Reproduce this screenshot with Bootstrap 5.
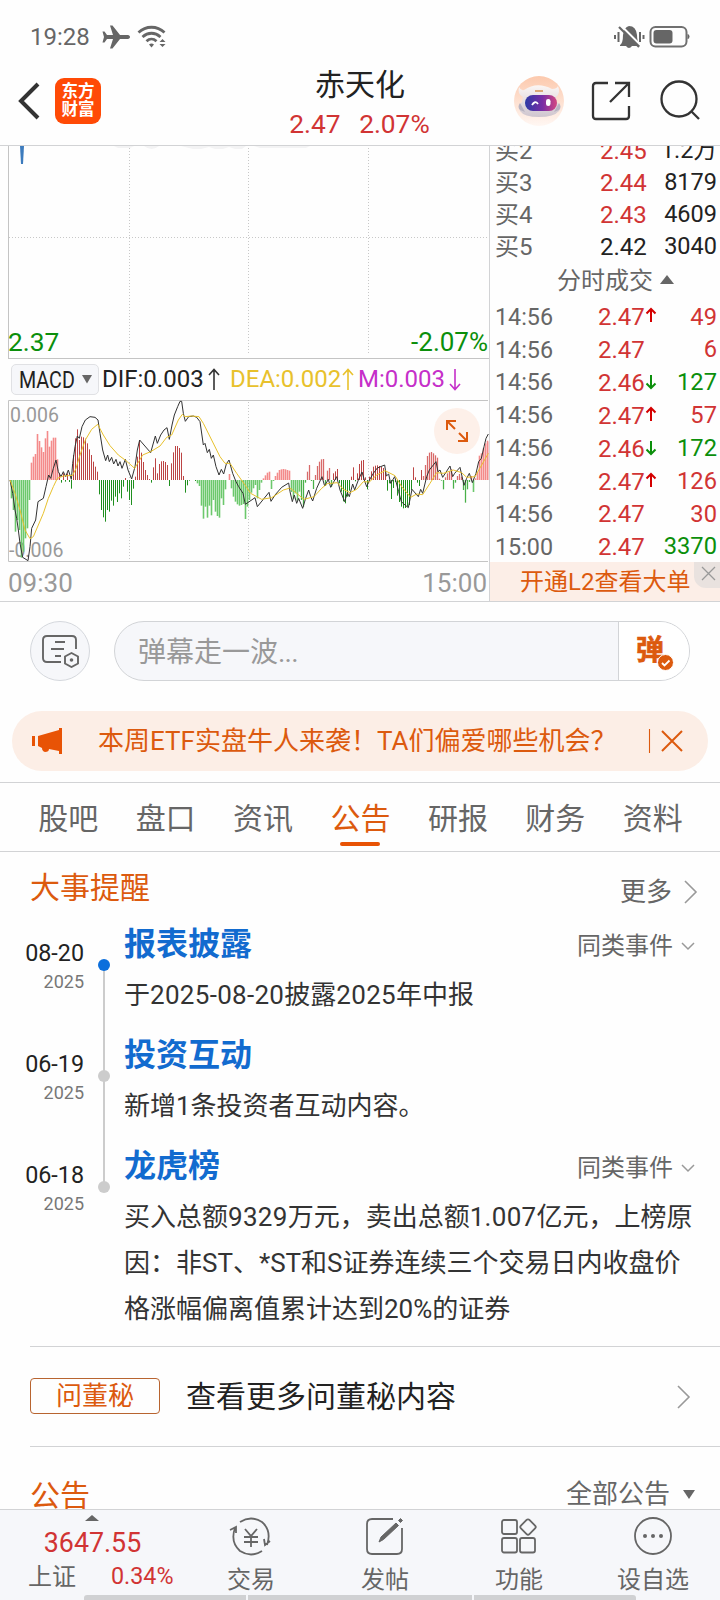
<!DOCTYPE html>
<html lang="zh-CN">
<head>
<meta charset="utf-8">
<meta name="viewport" content="width=device-width, initial-scale=1">
<title>赤天化</title>
<link href="https://cdn.jsdelivr.net/npm/bootstrap@5.3.0/dist/css/bootstrap.min.css" rel="stylesheet">
<style>
:root{--up:#d13434;--down:#0b8f0b;--brand:#dc5a0e;--ink:#222;--mid:#666;--soft:#999;--rule:#d2d3d5;--pale:#f6f7fa}
body{font-family:Roboto,"Noto Sans CJK SC",sans-serif;line-height:1;color:var(--ink);background:#fefefe;width:720px;height:1600px;overflow:hidden}
svg{display:block;flex:none}
.up{color:var(--up)}.down{color:var(--down)}.brand{color:var(--brand)}.mid{color:var(--mid)}.soft{color:var(--soft)}
.f18{font-size:18px}.f20{font-size:19.5px}.f23{font-size:23.3px}.f24{font-size:24px}.f26{font-size:26px}.f30{font-size:30px}
.dg{letter-spacing:.3px}
.statusbar{height:72px;padding:1px 30px 0 30px;color:#666}
.topbar{height:74px;border-bottom:1px solid var(--rule)}
.side{width:240px}
.logo{width:46px;height:46px;border-radius:9px;background:#ff4a06;color:#fff;font-size:16.5px;font-weight:700;line-height:18px}
.quote{height:456px;border-bottom:1px solid var(--rule)}
.chartcol{width:490px;padding-left:8px;border-right:1px solid var(--rule)}
.price-pane{height:213px;border-left:1px solid #c4c4c4;border-bottom:1px solid #c4c4c4}
.price-pane svg,.macd-pane > svg{position:absolute;left:0;top:0}
.price-pane .lab{position:absolute;bottom:3px}
.legend-row{height:41px;font-size:24px;padding-left:3px}
.picker{width:88px;height:31px;background:var(--pale);border:1px solid #e0e1e4;border-radius:5px;padding-left:7px}
.picker .nm{width:55px;transform:scaleX(.82);transform-origin:0 50%}
.macd-pane{height:162px}
.macd-pane .lab{position:absolute;left:2px}
.expand{position:absolute;left:426px;top:8px;width:46px;height:46px;background:#fdf0e9;border-radius:50%}
.axis{height:40px;padding-right:2px;padding-top:1px}
.book{width:230px;overflow:hidden}
.lv{height:32px;padding:0 3px 0 5px}
.lv span:nth-child(1){width:105px}.lv span:nth-child(2){width:54px}
.lv span:nth-child(3){flex:1;text-align:right;font-size:23.5px}
.tick{height:32.85px;padding:0 3px 0 5px}
.tick .tm{width:103px;font-size:23.3px}.tick .pr{width:47px}.tick .ar{width:14px}.tick .vol{flex:1;text-align:right;font-size:23.7px}
.l2{height:40px;background:#fceee7;padding-left:30px;padding-bottom:1px;position:relative}
.l2 .x{position:absolute;right:0;top:0;width:26px;height:26px;background:#e9e2df;border-bottom-left-radius:12px}
.barrage{height:109px;padding:19px 30px 0}
.setbtn{width:60px;height:60px;border:1px solid #d5d8dd;border-radius:50%;background:var(--pale)}
.capsule{width:576px;height:60px;border:1px solid #d2d4d7;border-radius:30px;background:var(--pale);font-size:28px;overflow:hidden}
.capsule .send{width:71px;background:#fff;border-left:1px solid #d2d4d7}
.promo{height:60px;margin:0 12px;border-radius:30px;background:#fceee6;padding:0 24px 0 20px;font-size:26px}
.tabs{margin-top:11px;height:70px;border-top:1px solid var(--rule);border-bottom:1px solid var(--rule);padding:0 19px;font-size:30px}
.tabs .t{position:relative;height:68px;padding:3px 0 0 1px}
.tabs .on::after{content:"";position:absolute;left:50%;bottom:5px;width:40px;height:4px;margin-left:-20px;border-radius:2px;background:#e85305}
.secthead{height:74px;padding:0 22px 2px 30px}
.ev{min-height:111px}
.ev .date{width:84px;padding-top:16px;text-align:right}
.ev .date .y{margin-top:8px;color:#777}
.rail{width:40px;position:relative}
.rail i{position:absolute;left:14px;top:33px;width:12px;height:12px;border-radius:50%;background:#ccc}
.rail i.now{background:#0c6fdc}
.rail.go::before{content:"";position:absolute;left:19px;top:39px;width:2px;height:111px;background:#ccc}
.ev h3{font-size:32px;line-height:36px;font-weight:700;color:#126bcf;margin:0}
.ev p{font-size:26px;line-height:46px;margin:10px 0 0;color:#333}
.ask{margin-left:30px;height:101px;border-top:1px solid var(--rule);border-bottom:1px solid var(--rule);padding-right:29px}
.asktag{width:130px;height:36px;border:1px solid #b86430;border-radius:4px;margin-top:-2px}
.notice{height:62px;padding:34px 24px 0 30px;overflow:hidden}
.dock{height:91px;background:var(--pale);border-top:1px solid var(--rule);position:relative}
.dock .idx{width:184px}
.dock .item{width:134px;padding-top:7px}
.dock .item span{margin-top:11px}
.scrollhint{position:absolute;left:84px;bottom:0;width:552px;height:5px;gap:2px}
.scrollhint span{background:#d0d1d3}
</style>
</head>
<body>
<div class="statusbar d-flex align-items-center justify-content-between">
  <div class="d-flex align-items-center f24"><span style="width:61px;margin-right:2px">19:28</span>
    <svg class="ms-2" width="30" height="26" viewBox="0 0 30 26"><path fill="#666" d="M29 13c0 1.500-1.500 2-3 2h-7l-7.500 9.500H9L12 15H6l-2.500 3.500H1.500L3 13 1.500 7.500h2L6 11h6L9 1.500h2.500L19 11h7c1.500 0 3 .5 3 2z"/></svg>
    <svg style="margin-left:6px" width="30" height="26" viewBox="0 0 30 26" fill="none" stroke="#666" stroke-width="2.800"><path d="M1.500 8.500C9 1.500 20 1.500 27.500 8.500M5.500 13C11 8 18 8 23.500 13M9.500 17.200c3-2.800 7-2.800 10 0"/><path fill="#666" stroke="none" d="M12 20.500q2.500-2 5 0l-2.500 3zM22.500 18l3-3 3 3zM22.500 20l3 3 3-3z"/></svg>
  </div>
  <div class="d-flex align-items-center">
    <svg width="32" height="26" viewBox="0 0 32 26"><path fill="#666" d="M7 21q3-2 3-10 1-8 6-9 7 0 8 9 0 7 3 9v2h-8q-3 4-6 0H7z"/><path stroke="#fefefe" stroke-width="2" d="M6.500 0l22 22"/><path stroke="#666" stroke-width="2.200" d="M6 3l20 20"/><path stroke="#666" stroke-width="2" d="M2 11v4M5.500 8v10M27 8v10M30.500 11v4"/></svg>
    <svg class="ms-1" width="41" height="24" viewBox="0 0 41 24"><rect x="1.500" y="2" width="36" height="19.500" rx="5" fill="none" stroke="#707070" stroke-width="2"/><rect x="4.500" y="5" width="19" height="13.500" rx="3" fill="#666"/><path fill="#666" d="M38.500 9q2 0 2 2.500t-2 2.500z"/></svg>
  </div>
</div>

<header class="topbar d-flex">
  <div class="side d-flex align-items-start ps-3">
    <svg width="26" height="40" viewBox="0 0 26 40" style="margin:8px 13px 0 0"><path d="M22 4L5 21l17 17" fill="none" stroke="#333" stroke-width="4"/></svg>
    <div class="logo d-flex flex-column align-items-center justify-content-center" style="margin-top:6px"><span>东方</span><span>财富</span></div>
  </div>
  <div class="side text-center"><div style="font-size:30px;line-height:26px">赤天化</div><div class="up" style="font-size:26.3px;margin:13px 0 0 -1px;white-space:pre">2.47 <span style="margin-left:12px">2.07%</span></div></div>
  <div class="side d-flex align-items-start" style="padding-left:33px">
    <svg width="52" height="52" viewBox="0 0 52 52" style="margin-top:3px"><defs><linearGradient id="halo" x2="0" y2="1"><stop stop-color="#fcc9ad"/><stop offset="1" stop-color="#fff7f3"/></linearGradient><linearGradient id="shell" x2="0" y2="1"><stop stop-color="#fbf6f4"/><stop offset="1" stop-color="#cfc6cf"/></linearGradient><linearGradient id="visor"><stop stop-color="#2c3aa5"/><stop offset=".55" stop-color="#7a2da5"/><stop offset="1" stop-color="#d44880"/></linearGradient></defs><circle cx="26" cy="26" r="25" fill="url(#halo)"/><path fill="url(#shell)" d="M6 12q2 4 5 3Q24 6 39 14q5 0 6-3 3 7-2 11l1 5q5 4 2 9-5 6-20 6-15 0-19-6-2-6 2-9l1-5Q4 19 6 12z"/><path fill="#b9b4c2" d="M7 28q-3 4 0 7l5 2zM46 28q3 4 0 7l-5 2z"/><rect x="12" y="20" width="32" height="16" rx="8" fill="url(#visor)"/><path d="M19 30q3-5 6-1" fill="none" stroke="#fff" stroke-width="1.800"/><rect x="33" y="24" width="4.500" height="7" rx="2.200" fill="#fff"/><path d="M22 16h8" stroke="#dca878" stroke-width="2"/></svg>
    <svg width="42" height="42" viewBox="0 0 42 42" style="margin:8px 0 0 25px" fill="none" stroke="#333" stroke-width="2.300"><path d="M18 3H6Q3 3 3 6v30q0 3 3 3h30q3 0 3-3V26M25 3h14v14M39 3L20 22"/></svg>
    <svg width="44" height="44" viewBox="0 0 44 44" style="margin:6px 0 0 25px" fill="none" stroke="#333" stroke-width="2.300"><circle cx="22" cy="21" r="17.500"/><path d="M34 33l8 8"/></svg>
  </div>
</header>

<section class="quote d-flex">
  <div class="chartcol">
    <div class="price-pane position-relative">
      <svg width="480" height="211" viewBox="0 0 480 211"><g stroke="#c8c8c8" stroke-dasharray="1 2"><path d="M120.500 2v207M239.500 2v207M359.500 2v207M0 91.500h479"/></g><path fill="#3c7bbd" d="M11 0h4l-1 18h-2z"/><path fill="#f3f3f4" d="M105 0h20l-4 2h-12zM135 0h15q-7 6-15 0zM172 0h65l-4 3h-7l-6-2-6 2h-8l-6-2-8 2h-8zM245 0h56l-4 2h-46z"/></svg>
      <span class="lab down" style="left:-1px;font-size:26.300px">2.37</span><span class="lab f26 down" style="right:1px">-2.07%</span>
    </div>
    <div class="legend-row d-flex align-items-center">
      <div class="picker d-flex align-items-center"><span class="nm">MACD</span><svg width="12" height="9" viewBox="0 0 12 9" style="margin-left:7px"><path fill="#666" d="M1 0h10L6 8.500z"/></svg></div>
      <span style="margin:-2px 0 0 3px;width:105px">DIF:0.003</span>
      <svg width="14" height="24" viewBox="0 0 14 24" style="margin-top:-2px" fill="none" stroke="#333" stroke-width="1.600"><path d="M7 23V3M2 8l5-5.500L12 8"/></svg>
      <span style="margin:-2px 0 0 9px;width:111px;color:#e8c12c">DEA:0.002</span>
      <svg width="14" height="24" viewBox="0 0 14 24" style="margin-top:-2px" fill="none" stroke="#e8c12c" stroke-width="1.600"><path d="M7 23V3M2 8l5-5.500L12 8"/></svg>
      <span style="margin:-2px 0 0 3px;width:90px;color:#c52fc9">M:0.003</span>
      <svg width="14" height="24" viewBox="0 0 14 24" style="margin-top:-2px" fill="none" stroke="#c52fc9" stroke-width="1.600"><path d="M7 2v20M2 17l5 5.500 5-5.500"/></svg>
    </div>
    <div class="macd-pane position-relative">
      <span class="lab f20 soft" style="top:6px">0.006</span><span class="lab f20 soft" style="bottom:2px;left:1px">-0.006</span>
      <svg id="macd" width="481" height="162" viewBox="24 210 1443 486"><g fill="none" stroke="#c4c4c4" stroke-width="3"><path d="M1464 211.500H25.500v483H1464"/></g><g stroke="#c8c8c8" stroke-width="3" stroke-dasharray="3 6"><path d="M388.500 216v474M745.500 216v474M1105.500 216v474"/></g></svg>
      <div class="expand d-flex align-items-center justify-content-center"><svg width="24" height="24" viewBox="0 0 24 24" fill="none" stroke="#dc5a0e" stroke-width="2"><path d="M11 2H2v9M2 2l8 8M13 22h9v-9M22 22l-8-8"/></svg></div>
    </div>
    <div class="axis f26 soft d-flex align-items-center justify-content-between"><span>09:30</span><span>15:00</span></div>
  </div>
  <div class="book">
    <div style="margin-top:-11px" class="f24">
      <div class="lv d-flex align-items-center"><span class="mid">买2</span><span class="up">2.45</span><span>1.2万</span></div>
      <div class="lv d-flex align-items-center"><span class="mid">买3</span><span class="up">2.44</span><span>8179</span></div>
      <div class="lv d-flex align-items-center"><span class="mid">买4</span><span class="up">2.43</span><span>4609</span></div>
      <div class="lv d-flex align-items-center"><span class="mid">买5</span><span>2.42</span><span>3040</span></div>
    </div>
    <div class="f24 mid d-flex align-items-center" style="height:36px;padding-left:67px">分时成交<svg width="14" height="11" viewBox="0 0 14 11" style="margin:-4px 0 0 7px"><path fill="#666" d="M0 10L7 1l7 9z"/></svg></div>
    <div id="ticks" class="f24" style="height:263px;padding-top:2px"></div>
    <div class="l2 f24 brand d-flex align-items-center">开通L2查看大单<div class="x d-flex align-items-center justify-content-center"><svg width="15" height="15" viewBox="0 0 15 15" style="margin:-4px -3px 0 0" stroke="#999" stroke-width="1.300"><path d="M1 1l13 13M14 1L1 14"/></svg></div></div>
  </div>
</section>

<section class="barrage d-flex justify-content-between">
  <div class="setbtn d-flex align-items-center justify-content-center"><svg width="38" height="34" viewBox="0 0 38 34" fill="none" stroke="#666" stroke-width="1.900"><path d="M20 28H6q-4 0-4-4V6q0-4 4-4h25q4 0 4 4v9M14 8h10M10 15h13M14 22h6"/><path d="M30.500 19l6.500 3.500v7L30.500 33 24 29.500v-7z"/><circle cx="30.500" cy="26" r="1.800" fill="#666" stroke="none"/></svg></div>
  <div class="capsule d-flex"><div class="flex-grow-1 d-flex align-items-center soft" style="padding:3px 0 0 23px">弹幕走一波<span style="letter-spacing:-.8px">...</span></div>
    <div class="send position-relative"><span class="brand fw-bold" style="position:absolute;left:17px;top:15px;font-size:28px;line-height:28px;-webkit-text-stroke:.6px">弹</span><svg style="position:absolute;left:38px;top:32px" width="17" height="17" viewBox="0 0 17 17"><circle cx="8.500" cy="8.500" r="8" fill="#dc5a0e" stroke="#fff"/><path d="M5 9l2.500 2.500 5-5" fill="none" stroke="#fff" stroke-width="1.800"/></svg></div>
  </div>
</section>

<div class="promo d-flex align-items-center brand">
  <svg width="32" height="28" viewBox="0 0 32 28"><path fill="#e85305" d="M0 9h3v10H0zM6 9L27 3V1h3v26h-3v-3l-10-2q0 3-4 3-3-1-3-4l-4-2z"/></svg>
  <span class="text-nowrap" style="margin-left:34px">本周ETF实盘牛人来袭！TA们偏爱哪些机会？</span>
  <svg class="ms-auto" width="36" height="26" viewBox="0 0 36 26" fill="none" stroke="#dc5a0e"><path stroke-width="1.100" d="M1.500 1v24"/><path stroke-width="2" d="M14 3l20 20M34 3L14 23"/></svg>
</div>

<nav class="tabs d-flex mid">
  <div class="t col d-flex align-items-center justify-content-center">股吧</div><div class="t col d-flex align-items-center justify-content-center">盘口</div><div class="t col d-flex align-items-center justify-content-center">资讯</div><div class="t on brand col d-flex align-items-center justify-content-center">公告</div><div class="t col d-flex align-items-center justify-content-center">研报</div><div class="t col d-flex align-items-center justify-content-center">财务</div><div class="t col d-flex align-items-center justify-content-center">资料</div>
</nav>

<section style="height:494px">
  <div class="secthead d-flex align-items-center justify-content-between"><span class="f30 brand">大事提醒</span>
    <span class="d-flex align-items-center f26 mid pt-2">更多<svg width="14" height="26" viewBox="0 0 14 26" style="margin-left:12px"><path d="M1 2l11 11L1 24" fill="none" stroke="#999" stroke-width="1.600"/></svg></span></div>
  <div class="ev d-flex"><div class="date"><div class="f23">08-20</div><div class="y f18">2025</div></div><div class="rail go"><i class="now"></i></div>
    <div class="flex-grow-1"><div class="d-flex justify-content-between align-items-center" style="padding-right:25px"><h3>报表披露</h3><span class="f24 mid d-flex align-items-center pt-1">同类事件<svg class="ms-2" width="14" height="10" viewBox="0 0 14 10"><path d="M1 2l6 6 6-6" fill="none" stroke="#999" stroke-width="1.500"/></svg></span></div><p>于<span class="dg">2025-08-20</span>披露<span class="dg">2025</span>年中报</p></div></div>
  <div class="ev d-flex"><div class="date"><div class="f23">06-19</div><div class="y f18">2025</div></div><div class="rail go"><i></i></div>
    <div class="flex-grow-1"><h3>投资互动</h3><p>新增1条投资者互动内容。</p></div></div>
  <div class="ev d-flex"><div class="date"><div class="f23">06-18</div><div class="y f18">2025</div></div><div class="rail"><i></i></div>
    <div class="flex-grow-1"><div class="d-flex justify-content-between align-items-center" style="padding-right:25px"><h3>龙虎榜</h3><span class="f24 mid d-flex align-items-center pt-1">同类事件<svg class="ms-2" width="14" height="10" viewBox="0 0 14 10"><path d="M1 2l6 6 6-6" fill="none" stroke="#999" stroke-width="1.500"/></svg></span></div><p class="text-nowrap">买入总额<span class="dg">9329</span>万元，卖出总额<span class="dg">1.007</span>亿元，上榜原<br>因：非ST、*ST和S证券连续三个交易日内收盘价<br>格涨幅偏离值累计达到20%的证券</p></div></div>
</section>

<div class="ask d-flex align-items-center"><span class="asktag brand f26 d-flex align-items-center justify-content-center">问董秘</span><span class="f30" style="margin-left:26px">查看更多问董秘内容</span>
  <svg class="ms-auto" width="14" height="26" viewBox="0 0 14 26"><path d="M1 2l11 11L1 24" fill="none" stroke="#999" stroke-width="1.600"/></svg></div>
<div class="notice d-flex justify-content-between align-items-start"><span class="f30 brand">公告</span><span class="f26 mid d-flex align-items-center">全部公告<svg width="14" height="11" viewBox="0 0 14 11" style="margin-left:12px"><path fill="#666" d="M1 1h12L7 10z"/></svg></span></div>

<footer class="dock d-flex">
  <div class="idx"><svg width="14" height="6" viewBox="0 0 14 6" style="margin:5px 0 0 85px"><path fill="#666" d="M0 6l7-6 7 6z"/></svg>
    <div class="up text-center" style="font-size:26.8px;margin:9px 0 0 1px">3647.55</div><div class="d-flex align-items-center" style="padding-left:28px;margin-top:8px"><span class="mid f24">上证</span><span class="up" style="margin-left:35px;font-size:23.300px">0.34%</span></div></div>
  <div class="item d-flex flex-column align-items-center mid f24"><svg width="44" height="40" viewBox="0 0 44 40" fill="none" stroke="#666" stroke-width="1.800"><path d="M11 5Q22-2 33 5q10 9 5 23M41 24l-5 4-1-6M33 34q-11 7-22 0-10-9-5-23M1 13l6-3v6M16 12l6 7 6-7M22 19v11M15 20h14M15 25h14"/></svg><span>交易</span></div>
  <div class="item d-flex flex-column align-items-center mid f24"><svg width="40" height="40" viewBox="0 0 40 40" fill="none" stroke="#666" stroke-width="1.800"><path d="M28 2H7Q2 2 2 7v25q0 5 5 5h25q5 0 5-5V11"/><path d="M14 25l2-5L31 6l2.500 2.500-15 14zM33.500 3.500l2-2 2 2-2 2z" fill="#666" stroke-width="1"/></svg><span>发帖</span></div>
  <div class="item d-flex flex-column align-items-center mid f24"><svg width="40" height="40" viewBox="0 0 40 40" fill="none" stroke="#666" stroke-width="1.800"><rect x="3" y="3" width="15" height="14" rx="2"/><rect x="3" y="21" width="15" height="14.500" rx="2"/><rect x="21" y="21" width="15" height="14.500" rx="2"/><rect x="23" y="4" width="12" height="12" rx="2" transform="rotate(45 29 10)"/></svg><span>功能</span></div>
  <div class="item d-flex flex-column align-items-center mid f24"><svg width="40" height="40" viewBox="0 0 40 40" fill="none" stroke="#666" stroke-width="1.800"><circle cx="20" cy="19" r="18"/><g fill="#666" stroke="none"><circle cx="12" cy="19" r="2"/><circle cx="20" cy="19" r="2"/><circle cx="28" cy="19" r="2"/></g></svg><span>设自选</span></div>
  <div class="scrollhint d-flex"><span style="width:162px;border-radius:3px 0 0 0"></span><span style="width:224px"></span><span style="width:162px;border-radius:0 3px 0 0"></span></div>
</footer>

<script src="https://cdn.jsdelivr.net/npm/bootstrap@5.3.0/dist/js/bootstrap.bundle.min.js"></script>
<script>
// time, price, direction, volume, volume colour
const trades=[["14:56","2.47","u",49,"up"],["14:56","2.47","",6,"up"],["14:56","2.46","d",127,"down"],["14:56","2.47","u",57,"up"],["14:56","2.46","d",172,"down"],["14:56","2.47","u",126,"up"],["14:56","2.47","",30,"up"],["15:00","2.47","",3370,"down"]];
const arrow={u:'<svg width="12" height="16" viewBox="0 0 12 16" style="margin-top:-4px" fill="none" stroke="#d40000" stroke-width="2"><path d="M6 15V2M1.500 6.500L6 2l4.500 4.500"/></svg>',d:'<svg width="12" height="16" viewBox="0 0 12 16" style="margin-top:-2px" fill="none" stroke="#0b8f0b" stroke-width="2"><path d="M6 1v13M1.500 9.500L6 14l4.500-4.500"/></svg>',"":""};
document.getElementById("ticks").innerHTML=trades.map(t=>`<div class="tick d-flex align-items-center"><span class="tm mid">${t[0]}</span><span class="pr up">${t[1]}</span><span class="ar">${arrow[t[2]]}</span><span class="vol ${t[4]}">${t[3]}</span></div>`).join("");

// MACD histogram, one value per minute
const hist=[-55,-90,-155,-120,-150,-233,-215,-175,-145,-60,52,70,78,138,117,98,84,125,147,100,118,127,127,62,20,-8,20,-5,20,-6,-26,75,125,152,120,130,128,124,110,92,75,55,40,25,-43,-90,-112,-125,-90,-95,-62,-77,-50,-66,-40,-55,-20,6,-35,-60,-75,-26,10,70,120,82,54,30,15,3,-8,38,65,20,48,56,57,54,45,-18,50,83,102,102,96,82,12,-38,-16,-2,0,0,-3,-10,-18,-77,-116,-80,-113,-77,-106,-60,-95,-108,-113,-55,-75,-28,0,18,-25,-50,-65,-73,-77,-75,-72,-117,-80,-60,-38,-25,-15,-55,-30,-8,5,14,22,25,-27,-3,12,22,30,32,33,32,30,28,-36,-56,-40,-62,-35,-60,-80,-8,25,45,-3,-27,15,42,55,62,63,-18,28,36,-20,20,26,33,-10,-35,-64,-70,-50,-32,10,38,-4,20,48,58,60,8,-28,10,26,40,43,44,42,40,36,26,-32,-10,-57,-24,-6,-47,-66,-80,-85,-84,-80,-75,-30,38,8,-8,-18,30,12,45,72,82,84,80,74,67,4,-2,-28,8,20,26,32,-26,-8,12,18,10,-30,-68,-28,-6,12,-36,5,25,73,80,95,110,118,115];
const dif="30,450 38,490 45,540 50,565 55,600 60,640 68,682 84,692 90,650 95,595 107,570 114,515 130,505 138,470 146,435 152,445 160,415 168,390 175,425 183,440 190,425 197,440 205,420 214,448 218,400 225,350 232,318 238,325 246,290 256,270 270,260 285,262 294,270 300,310 308,360 317,392 323,375 328,395 335,382 341,402 348,388 354,408 360,395 366,415 376,388 384,420 395,447 405,410 412,360 419,330 452,368 466,318 472,340 482,315 492,300 501,293 508,328 516,285 523,255 533,230 540,214 545,214 550,250 556,274 566,260 580,258 590,262 600,275 610,345 615,340 622,368 628,358 634,385 640,375 648,410 657,435 664,418 671,432 679,402 687,390 698,430 708,455 716,470 729,490 736,523 765,503 772,530 790,508 807,487 813,514 825,495 845,472 866,459 870,485 877,515 883,495 890,520 896,505 908,535 917,505 926,480 932,500 938,513 950,475 966,440 974,468 985,448 992,472 1010,440 1020,480 1034,515 1042,488 1048,500 1058,462 1064,480 1075,450 1086,426 1093,450 1100,470 1110,447 1120,430 1132,414 1154,405 1159,438 1166,432 1172,460 1184,440 1196,485 1204,515 1215,525 1225,533 1236,478 1255,500 1262,478 1268,490 1280,440 1288,420 1308,395 1314,425 1320,420 1328,442 1350,408 1358,440 1364,430 1380,412 1392,466 1400,445 1408,430 1417,458 1428,430 1436,395 1444,385 1452,350 1458,325 1465,312";
const dea="30,450 45,490 60,540 75,600 90,626 100,620 115,585 130,550 145,505 160,470 172,445 190,438 218,436 228,415 240,375 256,330 275,298 293,283 310,315 330,347 355,375 378,392 404,415 428,375 452,365 480,348 500,322 515,315 535,270 547,253 555,260 575,258 597,260 610,280 635,330 660,380 675,400 690,400 710,430 735,465 752,490 785,508 815,503 850,480 870,474 890,490 912,508 942,500 965,475 982,461 1012,458 1030,478 1050,488 1070,478 1090,455 1108,456 1130,435 1155,422 1185,437 1205,470 1232,502 1250,492 1268,494 1290,460 1310,428 1330,430 1360,420 1385,428 1400,442 1425,440 1445,405 1465,370";
let marks="";
hist.forEach((v,i)=>{const x=34.5+6*i,pale=x<176||(x>590&&x<900)||x>1420,half=x>=900&&x<1000||x>1270;
  marks+=`<path d="M${x} 450v${-v}" stroke="${v>0?(pale?"#f48a8a":half?"#d86a6a":"#bc4444"):(pale?"#6cc86c":half?"#48b048":"#1f8f1f")}" stroke-width="${pale?4.8:half?3.8:3}"/>`;});
document.getElementById("macd").insertAdjacentHTML("beforeend",marks+`<polyline points="${dif}" fill="none" stroke="#333" stroke-width="3"/><polyline points="${dea}" fill="none" stroke="#e8c12c" stroke-width="3"/>`);
</script>
</body>
</html>
